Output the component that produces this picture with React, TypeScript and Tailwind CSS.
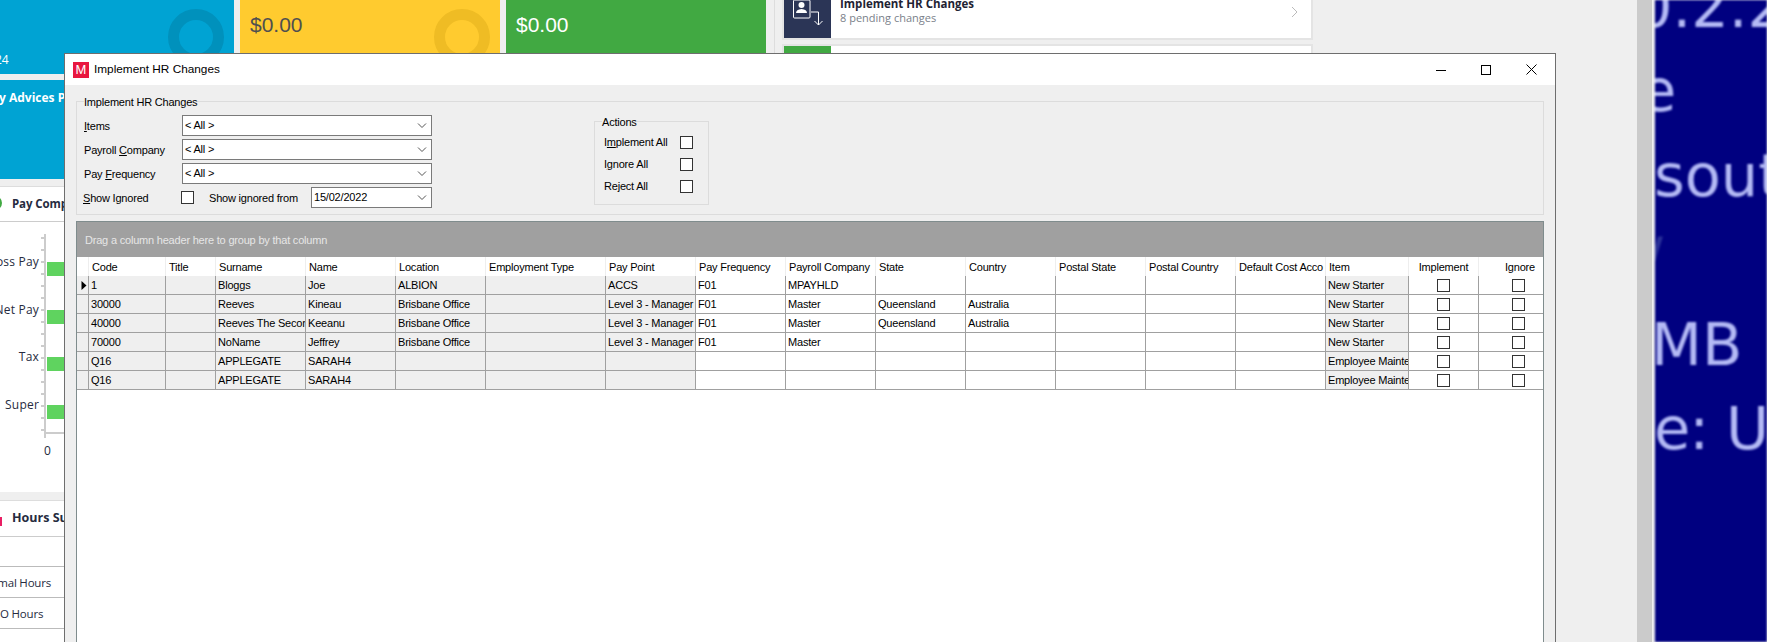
import { FC, ReactNode } from "react";

const GRID_COLS =
  "grid grid-cols-[12px_77px_50px_90px_90px_90px_120px_90px_90px_90px_90px_90px_90px_90px_90px_83px_70px_65px]";

const headers = [
  "",
  "Code",
  "Title",
  "Surname",
  "Name",
  "Location",
  "Employment Type",
  "Pay Point",
  "Pay Frequency",
  "Payroll Company",
  "State",
  "Country",
  "Postal State",
  "Postal Country",
  "Default Cost Acco",
  "Item",
];

const rows = [
  ["1", "", "Bloggs", "Joe", "ALBION", "", "ACCS", "F01", "MPAYHLD", "", "", "", "", "", "New Starter"],
  ["30000", "", "Reeves", "Kineau", "Brisbane Office", "", "Level 3 - Manager", "F01", "Master", "Queensland", "Australia", "", "", "", "New Starter"],
  ["40000", "", "Reeves The Second", "Keeanu", "Brisbane Office", "", "Level 3 - Manager", "F01", "Master", "Queensland", "Australia", "", "", "", "New Starter"],
  ["70000", "", "NoName", "Jeffrey", "Brisbane Office", "", "Level 3 - Manager", "F01", "Master", "", "", "", "", "", "New Starter"],
  ["Q16", "", "APPLEGATE", "SARAH4", "", "", "", "", "", "", "", "", "", "", "Employee Maintenance"],
  ["Q16", "", "APPLEGATE", "SARAH4", "", "", "", "", "", "", "", "", "", "", "Employee Maintenance"],
];

// columns on the grey read-only background
const isGrey = (i: number) => i <= 6 || i === 14;

const Check: FC<{ className?: string }> = ({ className = "" }) => (
  <span className={`block w-[13px] h-[13px] shrink-0 bg-white border border-[#333333] ${className}`} />
);

const Chevron: FC = () => (
  <svg width="10" height="6" viewBox="0 0 10 6" className="shrink-0 mr-[4px]">
    <path d="M1 0.5 L5 4.5 L9 0.5" fill="none" stroke="#555555" strokeWidth="1" />
  </svg>
);

const Combo: FC<{ value: string; className?: string }> = ({ value, className = "w-[250px]" }) => (
  <div className={`h-[21px] bg-white border border-[#7a7a7a] flex items-center justify-between pl-[2px] ${className}`}>
    <span>{value}</span>
    <Chevron />
  </div>
);

const U: FC<{ children: ReactNode }> = ({ children }) => <span className="underline underline-offset-1">{children}</span>;

const Tile: FC<{ bg: string; text: string; children: ReactNode }> = ({ bg, text, children }) => (
  <div className={`relative h-[74px] w-[260px] overflow-hidden pl-[10px] pt-[9px] text-[21px] font-['Liberation_Sans',sans-serif] ${bg} ${text}`}>
    {children}
  </div>
);

const Background: FC = () => (
  <div className="flex h-[642px] w-[1767px] bg-[#efefef] overflow-hidden font-['Open_Sans',sans-serif]">
    <div className="w-[766px] shrink-0 flex flex-col">
      <div className="flex gap-[6px]">
        <div className="relative w-[234px] h-[74px] bg-[#00a3d3] overflow-hidden text-white">
          <span className="absolute left-[168px] top-[9px] w-[56px] h-[56px] rounded-full border-[11px] border-[#0091bc]" />
          <span className="absolute left-[-5px] top-[51px] text-[12px]">24</span>
        </div>
        <Tile bg="bg-[#ffcb2f]" text="text-[#4f4f4f]">
          $0.00
          <span className="absolute left-[194px] top-[9px] w-[56px] h-[56px] rounded-full border-[11px] border-[#efbc24]" />
        </Tile>
        <Tile bg="bg-[#41a942]" text="text-white">$0.00</Tile>
      </div>
      <div className="mt-[6px] w-[234px] h-[99px] bg-[#00a3d3] text-white font-bold text-[12px] overflow-hidden">
        <div className="mt-[9px] ml-[-1px] whitespace-nowrap">y Advices Pr</div>
        <div className="mt-[49px] ml-[-7px] font-normal text-[12px]">0</div>
      </div>

      <div className="mt-[7px] h-[306px] bg-white border-t border-[#dddddd]">
        <div className="relative h-[35px] border-b border-[#cccccc] flex items-center pl-[12px] font-bold text-[11.5px] tracking-[-0.1px] text-[#262b40]">
          <span className="absolute left-[-12px] top-[9px] w-[14px] h-[14px] rounded-full border-[3px] border-[#41a942]" />
          Pay Comp
        </div>
        <div className="relative">
          <svg width="64" height="230" viewBox="0 0 64 230" className="absolute left-0 top-0">
            <path d="M45 12 V211 H64" fill="none" stroke="#cccccc" strokeWidth="2" />
            <path d="M45 211 V216" fill="none" stroke="#cccccc" strokeWidth="2" />
            {Array.from({ length: 17 }, (_, i) => (
              <path key={i} d={`M41 ${16 + i * 12} H44`} stroke="#cccccc" strokeWidth="2" />
            ))}
          </svg>
          <div className="relative pt-[23px] text-[12px] tracking-[0.2px] text-[#262b40]">
            {["Gross Pay", "Net Pay", "Tax", "Super"].map((label) => (
              <div key={label} className="h-[47.6px] flex">
                <div className="w-[39px] shrink-0 flex justify-end pt-[10px] h-[24px] leading-[14px] whitespace-nowrap">{label}</div>
                <div className="ml-[8px] mt-[17px] h-[14px] w-[300px] bg-[#5fd35f]" />
              </div>
            ))}
            <div className="ml-[44px] mt-[9px] leading-[14px] tracking-normal">0</div>
          </div>
        </div>
      </div>

      <div className="mt-[8px] flex-1 bg-white border-t border-[#dddddd] text-[11.5px] tracking-[-0.2px] text-[#262b40]">
        <div className="relative h-[36px] border-b border-[#cccccc] flex items-center pl-[12px] font-bold text-[12.5px] tracking-normal">
          <span className="absolute left-[-8px] top-[16px] w-[10px] h-[9px] border-2 border-[#e91e63]" />
          Hours Su
        </div>
        <div className="h-[30px] border-b border-[#bbbbbb]" />
        <div className="h-[31px] border-b border-[#bbbbbb] pt-[2px] flex items-center justify-end w-[64px] pr-[13px] whitespace-nowrap">Normal Hours</div>
        <div className="h-[31px] border-b border-[#bbbbbb] pt-[2px] flex items-center w-[64px] whitespace-nowrap">O Hours</div>
      </div>
    </div>

    <div className="ml-[8px] h-full w-px bg-[#dddddd] shrink-0" />

    <div className="ml-[7px] w-[531px] shrink-0 flex flex-col gap-[4px] -mt-[24px]">
      <div className="relative h-[64px] bg-white border-2 border-[#e4e4e4] flex">
        <div className="w-[47px] bg-[#2b3556] shrink-0">
          <svg width="47" height="62" viewBox="-1 -24 47 62">
            <rect x="8.5" y="-2" width="16.5" height="18" rx="1" fill="none" stroke="#ffffff" strokeWidth="1" />
            <circle cx="16.5" cy="3" r="3" fill="#ffffff" />
            <path d="M11 11 Q11 7.5 16.5 7 Q22 7.5 22 11 Z" fill="#ffffff" />
            <path d="M26 10 H33.5 V23 M29.5 19 L33.5 23 L37.5 19" fill="none" stroke="#ffffff" strokeWidth="1" />
          </svg>
        </div>
        <div className="pl-[9px] pt-[18px] flex-1 leading-[15px]">
          <div className="font-bold text-[11.5px] text-[#1f2333]">Implement HR Changes</div>
          <div className="text-[11px] text-[#7a7f8a] mt-[-1px]">8 pending changes</div>
        </div>
        <svg width="8" height="12" viewBox="0 0 8 12" className="mr-[12px] mt-[28px]">
          <path d="M1 1 L6 6 L1 11" fill="none" stroke="#bbbbbb" strokeWidth="1" />
        </svg>
      </div>
      <div className="h-[64px] bg-white border-2 border-[#e4e4e4] flex">
        <div className="w-[47px] bg-[#41a942]" />
      </div>
    </div>

    <div className="ml-[324px] w-[15px] bg-[#cbcbcb] shrink-0" />
    <div className="w-[3px] bg-[#efefef] shrink-0" />
    <div className="flex-1 bg-[#000080] overflow-hidden font-['DejaVu_Sans',sans-serif] text-[59px] leading-[84.4px] text-[#b4baf5] whitespace-nowrap blur-[1px]">
      <div className="-mt-[35px] -ml-[20px]">0.2.2</div>
      <div className="-ml-[15px]">e</div>
      <div className="-ml-[1px]">sout</div>
      <div className="-ml-[12px] text-[#2a3198]">/</div>
      <div className="-ml-[4px]">MB</div>
      <div className="-ml-[1px] tracking-[-1px]">e: U</div>
    </div>
  </div>
);

const HRWindow: FC = () => (
  <div className="absolute left-[64px] top-[53px] w-[1492px] h-[589px] flex flex-col bg-[#efefef] border-x border-t border-[#6e6e6e] font-['Liberation_Sans',sans-serif] text-[11px] tracking-[-0.2px] leading-[13px] text-black">
    {/* Title bar */}
    <div className="h-[31px] shrink-0 bg-white flex items-center pl-[8px] pr-[18px]">
      <span className="w-[16px] h-[16px] bg-[#e8173f] text-white flex items-center justify-center text-[13px] tracking-normal">M</span>
      <span className="ml-[5px] text-[11.8px] tracking-normal">Implement HR Changes</span>
      <div className="ml-auto flex items-center gap-[35px]">
        <svg width="10" height="10" viewBox="0 0 10 10">
          <path d="M0 5.5 H10" stroke="#000000" strokeWidth="1" />
        </svg>
        <svg width="10" height="10" viewBox="0 0 10 10">
          <rect x="0.5" y="0.5" width="9" height="9" fill="none" stroke="#000000" strokeWidth="1" />
        </svg>
        <svg width="11" height="11" viewBox="0 0 11 11">
          <path d="M0.5 0.5 L10.5 10.5 M10.5 0.5 L0.5 10.5" stroke="#000000" strokeWidth="1" />
        </svg>
      </div>
    </div>

    <div className="flex-1 min-h-0 flex flex-col pl-[11px] pr-[11px]">
      {/* Filters */}
      <fieldset className="mt-[10px] shrink-0 border border-[#dcdcdc]">
        <legend className="ml-[7px] relative top-px">Implement HR Changes</legend>
        <div className="flex pl-[7px] pt-[7px] pb-[6px]">
          <div className="w-[348px] flex flex-col gap-[3px]">
            <div className="flex items-center h-[21px]">
              <span className="w-[98px] pt-[2px]"><U>I</U>tems</span>
              <Combo value="< All >" />
            </div>
            <div className="flex items-center h-[21px]">
              <span className="w-[98px] pt-[2px]">Payroll <U>C</U>ompany</span>
              <Combo value="< All >" />
            </div>
            <div className="flex items-center h-[21px]">
              <span className="w-[98px] pt-[2px]">Pay <U>F</U>requency</span>
              <Combo value="< All >" />
            </div>
            <div className="flex items-center h-[21px]">
              <span className="w-[98px] -ml-px pt-[2px]"><U>S</U>how Ignored</span>
              <Check />
              <span className="ml-[15px] w-[102px] pt-[2px]">Show ignored from</span>
              <Combo value="15/02/2022" className="w-[121px]" />
            </div>
          </div>
          <fieldset className="ml-[162px] self-start w-[115px] border border-[#dcdcdc] pb-[11px]">
            <legend className="ml-[7px] relative top-px">Actions</legend>
            <div className="flex flex-col gap-[9px] pt-[8px] pl-[9px]">
              <div className="flex items-center justify-between pr-[15px]">
                <span>I<U>m</U>plement All</span>
                <Check />
              </div>
              <div className="flex items-center justify-between pr-[15px]">
                <span>I<U>g</U>nore All</span>
                <Check />
              </div>
              <div className="flex items-center justify-between pr-[15px]">
                <span>Reject All</span>
                <Check />
              </div>
            </div>
          </fieldset>
        </div>
      </fieldset>

      {/* Grid */}
      <div className="mt-[6px] flex-1 min-h-0 bg-white border-x border-t border-[#7f8c8d] flex flex-col">
        <div className="h-[35px] shrink-0 bg-[#a0a0a0] text-[#e6e6e6] flex items-center pl-[8px] pt-[2px]">
          Drag a column header here to group by that column
        </div>
        <div className={`${GRID_COLS} h-[19px]`}>
          {headers.map((h, i) => (
            <div key={i} className="border-r border-[#eeeeee] pl-[3px] pt-[2px] flex items-center overflow-hidden whitespace-nowrap">
              {h}
            </div>
          ))}
          <div className="border-r border-[#eeeeee] pt-[2px] flex items-center justify-center">Implement</div>
          <div className="flex items-center justify-end pr-[9px] pt-[2px]">Ignore</div>
        </div>
        {rows.map((row, r) => (
          <div key={r} className={`${GRID_COLS} h-[19px] border-b border-[#a0a0a0]`}>
            <div className="bg-[#efefef] border-r border-[#a0a0a0] flex items-center justify-end pr-[1px]">
              {r === 0 && (
                <svg width="6" height="9" viewBox="0 0 6 9">
                  <path d="M0.5 0 L5.5 4.5 L0.5 9 Z" fill="#000000" />
                </svg>
              )}
            </div>
            {row.map((cell, c) => (
              <div
                key={c}
                className={`border-r border-[#a0a0a0] pl-[2px] flex items-center overflow-hidden whitespace-nowrap ${isGrey(c) ? "bg-[#efefef]" : "bg-white"}`}
              >
                {cell}
              </div>
            ))}
            <div className="border-r border-[#a0a0a0] flex items-center justify-center pr-px">
              <Check />
            </div>
            <div className="flex items-center pl-[33px]">
              <Check />
            </div>
          </div>
        ))}
      </div>
    </div>
  </div>
);

export default function App() {
  return (
    <div className="relative w-[1767px] h-[642px] overflow-hidden">
      <Background />
      <HRWindow />
    </div>
  );
}
